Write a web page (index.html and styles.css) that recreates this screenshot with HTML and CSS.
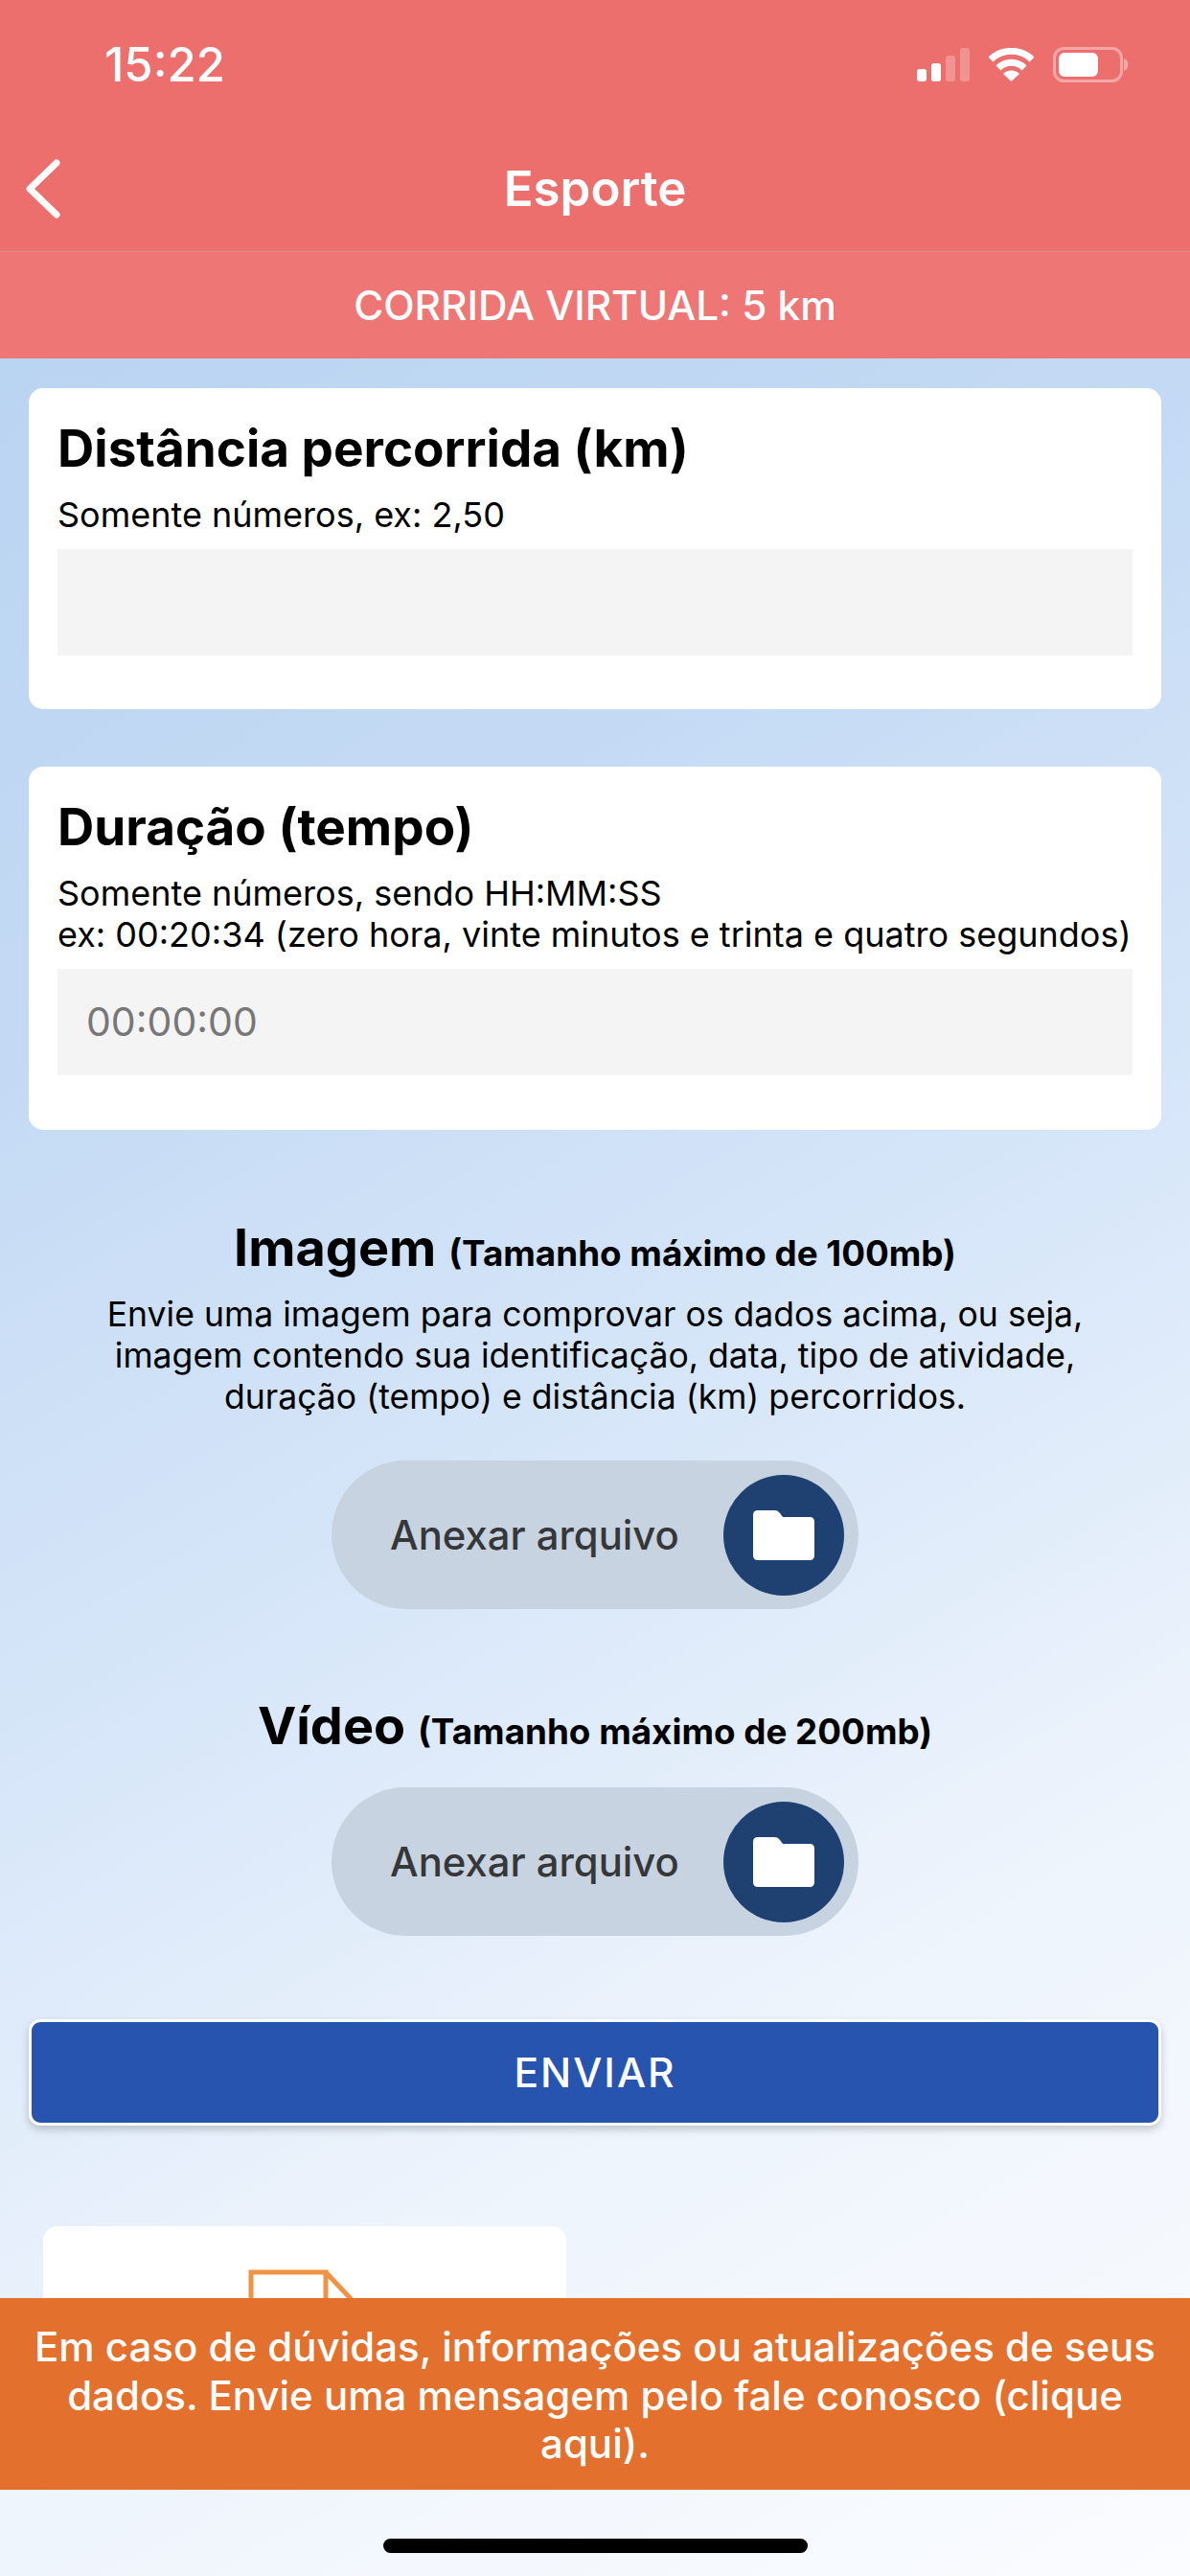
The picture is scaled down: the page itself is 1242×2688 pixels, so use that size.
FILE: index.html
```html
<!DOCTYPE html>
<html lang="pt-BR">

<head>
    <meta charset="utf-8">
    <meta name="viewport" content="width=device-width, initial-scale=1.0">
    <title>Esporte</title>
    <link rel="stylesheet" href="styles.css">
</head>

<body>
    <header class="topo">
        <div class="status">
            <span class="hora">15:22</span>
            <div class="status-icones">
                <svg width="55" height="35" viewBox="0 0 55 35">
                    <rect x="0" y="22" width="10" height="13" rx="3" fill="#fff"/>
                    <rect x="15" y="16" width="10" height="19" rx="3" fill="#fff"/>
                    <rect x="30" y="8" width="10" height="27" rx="3" fill="#fff" opacity=".25"/>
                    <rect x="45" y="0" width="10" height="35" rx="3" fill="#fff" opacity=".25"/>
                </svg>
                <svg width="47" height="35" viewBox="0 0 47 35">
                    <path d="M2 12 A31 31 0 0 1 45 12" fill="none" stroke="#fff" stroke-width="7"/>
                    <path d="M10 21 A19 19 0 0 1 37 21" fill="none" stroke="#fff" stroke-width="7"/>
                    <path d="M15 27 A12 12 0 0 1 32 27 L23.500 35 Z" fill="#fff"/>
                </svg>
                <svg width="79" height="37" viewBox="0 0 79 37">
                    <rect x="1.500" y="1.500" width="70" height="34" rx="10" fill="none" stroke="#fff" stroke-opacity=".4" stroke-width="3"/>
                    <rect x="6" y="6" width="41" height="25" rx="6" fill="#fff"/>
                    <path d="M74 12 A7 7 0 0 1 74 25 Z" fill="#fff" fill-opacity=".4"/>
                </svg>
            </div>
        </div>
        <div class="barra">
            <svg class="voltar" width="38" height="62" viewBox="0 0 38 62">
                <path d="M33 4 L5 31 L33 58" fill="none" stroke="#fff" stroke-width="7" stroke-linecap="round" stroke-linejoin="round"/>
            </svg>
            <h1>Esporte</h1>
        </div>
        <div class="subtitulo">CORRIDA VIRTUAL: 5 km</div>
    </header>

    <main class="conteudo">
        <section class="card card-distancia">
            <h2>Distância percorrida (km)</h2>
            <p>Somente números, ex: 2,50</p>
            <div class="campo"></div>
        </section>

        <section class="card card-duracao">
            <h2>Duração (tempo)</h2>
            <p>Somente números, sendo HH:MM:SS<br>
                ex: 00:20:34 (zero hora, vinte minutos e trinta e quatro segundos)</p>
            <div class="campo">00:00:00</div>
        </section>

        <section class="anexo anexo-imagem">
            <h3>Imagem <small>(Tamanho máximo de 100mb)</small></h3>
            <p>Envie uma imagem para comprovar os dados acima, ou seja,<br>
                imagem contendo sua identificação, data, tipo de atividade,<br>
                duração (tempo) e distância (km) percorridos.</p>
            <div class="anexar">
                <span>Anexar arquivo</span>
                <span class="anexar-icone">
                    <svg width="64" height="52" viewBox="0 0 64 52">
                        <path d="M5 0 H23 Q26 0 28 3 L31 7 H59 Q64 7 64 12 V47 Q64 52 59 52 H5 Q0 52 0 47 V5 Q0 0 5 0 Z" fill="#fff"/>
                    </svg>
                </span>
            </div>
        </section>

        <section class="anexo anexo-video">
            <h3>Vídeo <small>(Tamanho máximo de 200mb)</small></h3>
            <div class="anexar">
                <span>Anexar arquivo</span>
                <span class="anexar-icone">
                    <svg width="64" height="52" viewBox="0 0 64 52">
                        <path d="M5 0 H23 Q26 0 28 3 L31 7 H59 Q64 7 64 12 V47 Q64 52 59 52 H5 Q0 52 0 47 V5 Q0 0 5 0 Z" fill="#fff"/>
                    </svg>
                </span>
            </div>
        </section>

        <button class="enviar">ENVIAR</button>

        <div class="mini-card">
            <svg width="114" height="60" viewBox="0 0 114 60">
                <path d="M3 60 V3 H81 V60 M81 3 L112 36" fill="none" stroke="#ef9445" stroke-width="5"/>
            </svg>
        </div>
    </main>

    <a class="aviso">Em caso de dúvidas, informações ou atualizações de seus dados. Envie uma mensagem pelo fale conosco (clique aqui).</a>
    <div class="home"></div>
</body>

</html>
```

FILE: styles.css
```css
html {
    margin: 0;
}

body {
    margin: 0;
    position: relative;
    height: 2688px;
    overflow: hidden;
    font-family: Inter, 'Liberation Sans', sans-serif;
    color: #000;
    background: linear-gradient(150deg, #b4d1f0 0%, #c4daf4 33%, #d8e7f9 56%, #eef4fc 76%, #fafcff 100%);
}

.topo {
    color: #fff;
    background-color: #ec6f6d;
}

.status {
    height: 135px;
    display: flex;
    justify-content: space-between;
    align-items: center;
    padding: 0 64px 0 109px;
}

.hora {
    font-size: 49px;
    font-weight: 500;
}

.status-icones {
    display: flex;
    align-items: center;
    gap: 20px;
}

.barra {
    position: relative;
    height: 128px;
    padding-bottom: 4px;
    box-sizing: border-box;
    display: flex;
    align-items: center;
    justify-content: center;
    border-bottom: 1px solid #d98f8e;
}

.voltar {
    position: absolute;
    left: 26px;
    top: 31px;
}

h1 {
    margin: 0;
    font-size: 51px;
    font-weight: 600;
}

.subtitulo {
    height: 111px;
    line-height: 111px;
    text-align: center;
    font-size: 42.300px;
    font-weight: 500;
    background-color: #ee7776;
}

.conteudo {
    padding: 31px 30px 0;
}

.card {
    background-color: #fff;
    border-radius: 15px;
    padding: 0 30px;
    box-sizing: border-box;
}

.card-distancia {
    height: 335px;
}

.card-duracao {
    height: 379px;
    margin-top: 60px;
}

h2 {
    margin: 0;
    padding-top: 31px;
    font-size: 53px;
    line-height: 64px;
    font-weight: 700;
}

.card p {
    margin: 16px 0 0;
    font-size: 36px;
    line-height: 43px;
}

.campo {
    height: 111px;
    line-height: 111px;
    margin-top: 14px;
    padding-left: 30px;
    font-size: 41px;
    color: #777;
    background-color: #f4f4f4;
}

.anexo {
    text-align: center;
}

.anexo-imagem {
    margin-top: 90px;
}

.anexo-video {
    margin-top: 89px;
}

h3 {
    margin: 0;
    font-size: 54px;
    line-height: 66px;
    font-weight: 700;
}

h3 small {
    font-size: 36.800px;
    font-weight: 700;
}

.anexo p {
    margin: 9px 0 0;
    font-size: 35.600px;
    line-height: 43px;
}

.anexar {
    width: 550px;
    height: 155px;
    margin: 45px auto 0;
    box-sizing: border-box;
    padding: 0 15px 0 61px;
    display: flex;
    align-items: center;
    justify-content: space-between;
    border-radius: 78px;
    font-size: 41.800px;
    font-weight: 500;
    color: #353739;
    background-color: #c7d3e0;
}

.anexo-video .anexar {
    margin-top: 25px;
}

.anexar-icone {
    width: 126px;
    height: 126px;
    display: flex;
    align-items: center;
    justify-content: center;
    border-radius: 50%;
    background-color: #1f4171;
}

.enviar {
    display: block;
    width: 100%;
    height: 111px;
    margin-top: 87px;
    padding: 0;
    border: 3px solid #fff;
    border-radius: 12px;
    font-family: inherit;
    font-size: 42.500px;
    font-weight: 500;
    letter-spacing: 2px;
    color: #fff;
    background-color: #2654ae;
    box-shadow: 0 4px 8px rgba(0, 0, 0, .2);
}

.mini-card {
    width: 546px;
    height: 200px;
    margin: 105px 0 0 15px;
    padding: 45px 0 0 214px;
    box-sizing: border-box;
    background-color: #fff;
    border-radius: 15px;
}

.aviso {
    position: absolute;
    left: 0;
    right: 0;
    top: 2398px;
    height: 200px;
    box-sizing: border-box;
    padding: 26px 30px 0;
    font-size: 42px;
    font-weight: 500;
    line-height: 50.500px;
    text-align: center;
    color: #fff;
    background-color: #e4702e;
}

.home {
    position: absolute;
    left: 400px;
    top: 2649px;
    width: 443px;
    height: 15px;
    border-radius: 8px;
    background-color: #000;
}
```
